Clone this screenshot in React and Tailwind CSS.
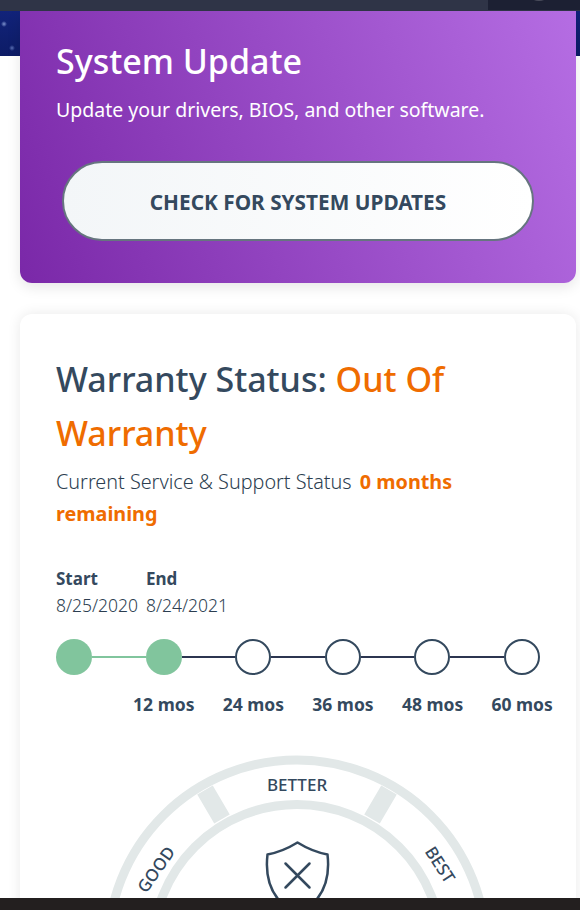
const months = ["12 mos", "24 mos", "36 mos", "48 mos", "60 mos"];

const Gauge = () => (
  <svg width="504" height="210" viewBox="0 0 504 210" className="block shrink-0">
    {/* center of the dial sits at 241,194 */}
    <g fill="none" stroke="#e2e8e8">
      <circle cx="241" cy="194" r="189" strokeWidth="9" />
      <circle cx="241" cy="194" r="144.5" strokeWidth="9" />
      <path d="M166 64 L149 35 M316 64 L333 35" strokeWidth="18" />
    </g>
    <text x="241" y="36" textAnchor="middle" fontSize="17" fontWeight="500" fill="#34495e">BETTER</text>
    <text x="0" y="0" textAnchor="middle" fontSize="17" fontWeight="500" fill="#34495e" transform="translate(105 118) rotate(-55)">GOOD</text>
    <text x="0" y="0" textAnchor="middle" fontSize="17" fontWeight="500" fill="#34495e" transform="translate(379 113) rotate(57)">BEST</text>
    <g fill="none" stroke="#34495e" strokeWidth="2.5" strokeLinecap="round" strokeLinejoin="round">
      <path d="M241.5 87.5 C231 94 222 97.5 211.5 99.5 C209 121 213 142 236 156 L247 156 C270 142 274 121 271.5 99.5 C261 97.5 252 94 241.5 87.5 Z" />
      <path d="M229.5 108.5 L253.5 132.5 M253.5 108.5 L229.5 132.5" />
    </g>
  </svg>
);

export default function App() {
  return (
    <div className="h-[910px] w-[580px] overflow-hidden bg-white flex flex-col font-['Noto_Sans','Open_Sans',sans-serif] text-[#34495e]">
      {/* top nav strip */}
      <div className="h-[11px] shrink-0 bg-[#2f3447] flex justify-end">
        <div className="w-[92px] h-[10px] bg-[#1c2033] overflow-hidden flex justify-end pr-[28px]">
          <div className="w-[26px] h-[26px] -mt-[25px] rounded-full bg-[#4a4d5c]" />
        </div>
      </div>

      <div className="flex-1 min-h-0 overflow-hidden">
        <div className="h-[45px] bg-[radial-gradient(circle_at_4px_13px,#7f93cf_0px,transparent_3px),radial-gradient(circle_at_12px_37px,#5a70b5_0px,transparent_3px),linear-gradient(#12237a,#0d1c66)]" />

        <section className="-mt-[45px] ml-5 mr-1 h-[272px] relative rounded-b-xl bg-[linear-gradient(70deg,#7a28a8,#b56de3)] px-9 pt-[26px] text-white shadow-[0_4px_14px_rgba(0,0,0,0.1)]">
          <h2 className="text-[34px] leading-[48px] font-medium">System Update</h2>
          <p className="mt-[12px] text-[19.5px] leading-[26px]">Update your drivers, BIOS, and other software.</p>
          <button className="mt-[38px] ml-[6px] w-[472px] h-[80px] pt-1 rounded-[40px] border-2 border-[#66757f] bg-gradient-to-r from-[#f3f6f8] to-white text-[#34495e] text-[20.8px] font-bold">
            CHECK FOR SYSTEM UPDATES
          </button>
        </section>

        <section className="mt-[31px] ml-5 mr-1 rounded-xl bg-white pl-9 pt-[38px] shadow-[0_0_14px_rgba(0,0,0,0.09)]">
          <h2 className="text-[34px] leading-[54px] font-medium pr-8">
            Warranty Status: <span className="text-[#ef6c00]">Out Of Warranty</span>
          </h2>
          <p className="mt-[6px] text-[19.8px] leading-[32px] font-light text-[#2c3e50] pr-8">
            Current Service &amp; Support Status <span className="ml-[3px] font-bold text-[#ef6c00]">0 months remaining</span>
          </p>

          <div className="mt-[36px] flex text-[17px] leading-[26px]">
            <div className="w-[90px]">
              <div className="font-bold">Start</div>
              <div className="font-light text-[17.5px] text-[#2c3e50]">8/25/2020</div>
            </div>
            <div>
              <div className="font-bold">End</div>
              <div className="font-light text-[17.5px] text-[#2c3e50]">8/24/2021</div>
            </div>
          </div>

          {/* 60 month timeline */}
          <div className="mt-[21px] w-[484px] flex items-center">
            <div className="w-9 h-9 shrink-0 rounded-full bg-[#81c59d]" />
            <div className="flex-1 h-[2px] bg-[#81c59d]" />
            <div className="w-9 h-9 shrink-0 rounded-full bg-[#81c59d]" />
            {months.slice(1).map((m) => (
              <div key={m} className="contents">
                <div className="flex-1 h-[2px] bg-[#2c3550]" />
                <div className="w-9 h-9 shrink-0 rounded-full border-2 border-[#34495e]" />
              </div>
            ))}
          </div>
          <div className="mt-[16px] flex pl-[63px]">
            {months.map((m) => (
              <span key={m} className="w-[89.6px] shrink-0 text-center text-[17.5px] leading-[26px] font-bold">{m}</span>
            ))}
          </div>

          <div className="mt-[38px]">
            <Gauge />
          </div>
        </section>
      </div>

      <div className="h-3 shrink-0 bg-[#231f1f]" />
    </div>
  );
}
